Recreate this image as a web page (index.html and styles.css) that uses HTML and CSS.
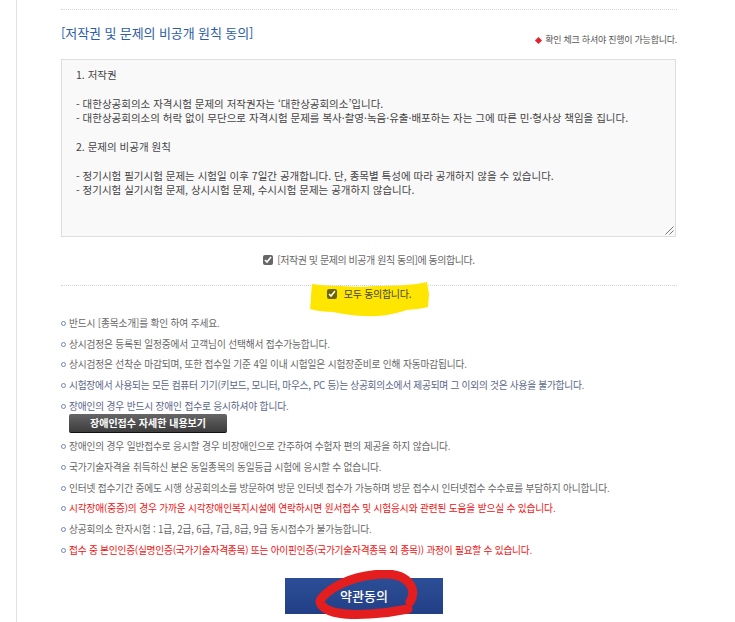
FILE: index.html
```html
<!DOCTYPE html>
<html lang="ko">
<head>
<meta charset="utf-8">
<title>약관동의</title>
<link rel="stylesheet" href="styles.css">
</head>
<body>
<div class="page">
  <div class="content">
    <div class="rule first"></div>
    <div class="head">
      <h2 class="title">[저작권 및 문제의 비공개 원칙 동의]</h2>
      <p class="notice"><span class="diamond"></span>확인 체크 하셔야 진행이 가능합니다.</p>
    </div>
    <div class="terms">
      <p>1. 저작권</p>
      <p>&nbsp;</p>
      <p>- 대한상공회의소 자격시험 문제의 저작권자는 ‘대한상공회의소’입니다.</p>
      <p>- 대한상공회의소의 허락 없이 무단으로 자격시험 문제를 복사·촬영·녹음·유출·배포하는 자는 그에 따른 민·형사상 책임을 집니다.</p>
      <p>&nbsp;</p>
      <p>2. 문제의 비공개 원칙</p>
      <p>&nbsp;</p>
      <p>- 정기시험 필기시험 문제는 시험일 이후 7일간 공개합니다. 단, 종목별 특성에 따라 공개하지 않을 수 있습니다.</p>
      <p>- 정기시험 실기시험 문제, 상시시험 문제, 수시시험 문제는 공개하지 않습니다.</p>
      <svg class="grip" width="10" height="10" viewBox="0 0 10 10"><path d="M9.5 1.5 1.5 9.5M9.5 5.5 5.5 9.5" stroke="#777" stroke-width="1" fill="none"/></svg>
    </div>
    <label class="agree"><input type="checkbox" checked>[저작권 및 문제의 비공개 원칙 동의]에 동의합니다.</label>
    <div class="rule"></div>
    <label class="agree all"><input type="checkbox" checked>모두 동의합니다.</label>
    <ul class="notes">
      <li>반드시 [종목소개]를 확인 하여 주세요.</li>
      <li>상시검정은 등록된 일정중에서 고객님이 선택해서 접수가능합니다.</li>
      <li>상시검정은 선착순 마감되며, 또한 접수일 기준 4일 이내 시험일은 시험장준비로 인해 자동마감됩니다.</li>
      <li class="blue tight">시험장에서 사용되는 모든 컴퓨터 기기(키보드, 모니터, 마우스, PC 등)는 상공회의소에서 제공되며 그 이외의 것은 사용을 불가합니다.</li>
      <li class="blue has-btn">장애인의 경우 반드시 장애인 접수로 응시하셔야 합니다.<a class="detail" href="#">장애인접수 자세한 내용보기</a></li>
      <li>장애인의 경우 일반접수로 응시할 경우 비장애인으로 간주하여 수험자 편의 제공을 하지 않습니다.</li>
      <li>국가기술자격을 취득하신 분은 동일종목의 동일등급 시험에 응시할 수 없습니다.</li>
      <li>인터넷 접수기간 중에도 시행 상공회의소를 방문하여 방문 인터넷 접수가 가능하며 방문 접수시 인터넷접수 수수료를 부담하지 아니합니다.</li>
      <li class="red">시각장애(중증)의 경우 가까운 시각장애인복지시설에 연락하시면 원서접수 및 시험응시와 관련된 도움을 받으실 수 있습니다.</li>
      <li>상공회의소 한자시험 : 1급, 2급, 6급, 7급, 8급, 9급 동시접수가 불가능합니다.</li>
      <li class="red snug">접수 중 본인인증(실명인증(국가기술자격종목) 또는 아이핀인증(국가기술자격종목 외 종목)) 과정이 필요할 수 있습니다.</li>
    </ul>
    <div class="actions"><a class="submit" href="#">약관동의</a></div>
  </div>
</div>
<svg class="mark yellow" width="119" height="35" viewBox="0 0 119 35"><path d="M2 2C10 3 20 4 30 4 45 5 55 5 65 4 85 4 105 3 117 0L119 12 118 25C110 27 104 27 97 28 84 32 70 35 57 34 45 34 33 32 23 30 15 30 7 29 0 27 1 18 1 10 2 2Z" fill="#ffe600"/></svg>
<svg class="mark scribble" width="110" height="52" viewBox="0 0 110 52"><path d="M94 39C70 44 40 46 24 43 12 41 3 34 7 29 16 17 38 7 58 5 72 3 85 4 92 10 99 16 101 24 96 32" fill="none" stroke="#e41e1e" stroke-width="9" stroke-linecap="round" stroke-linejoin="round"/></svg>
</body>
</html>
```
FILE: styles.css
```css
html, body { margin: 0; padding: 0; height: 622px; overflow: hidden; background: #fff; }
body { position: relative; font-family: "Noto Sans CJK KR", "Noto Sans", sans-serif; color: #555; }
p, h2, ul { margin: 0; padding: 0; }
.page { margin-left: 16px; border-left: 1px solid #e2e2e2; padding-left: 44px; width: 616px; height: 622px; }
.content { width: 616px; padding-top: 9px; }
.rule { border-top: 1px dotted #d4d4d4; }
.head { display: flex; justify-content: space-between; align-items: flex-end; height: 49px; }
.title { font-size: 13px; font-weight: 400; line-height: 20px; color: #2b5ea6; margin-bottom: 16px; letter-spacing: -0.1px; }
.notice { font-size: 9px; line-height: 12px; color: #555; margin-bottom: 13px; letter-spacing: -0.25px; display: flex; align-items: center; }
.diamond { width: 5px; height: 5px; background: #e8202a; transform: rotate(45deg); margin-right: 4px; }
.terms { position: relative; box-sizing: border-box; width: 615px; height: 178px; border: 1px solid #ddd; background: #f9f9f9; padding: 8px 14px; font-size: 10.5px; line-height: 14.4px; color: #444; }
.grip { position: absolute; right: 1px; bottom: 1px; }
.agree { display: flex; align-items: center; justify-content: center; font-size: 10px; line-height: 14px; color: #666; letter-spacing: -0.45px; }
.agree input { margin: 0 4px 0 0; width: 10px; height: 10px; accent-color: #666; }
.terms + .agree { margin: 16px 0 18px; }
.agree.all { position: relative; z-index: 2; margin-top: 1px; color: #444; height: 14px; letter-spacing: -0.3px; }
.agree.all input { margin-right: 7px; accent-color: #6b6400; }
.notes { list-style: none; margin-top: 15px; font-size: 9.7px; line-height: 14px; color: #666; }
.notes li { position: relative; padding-left: 8px; margin-bottom: 6.7px; letter-spacing: -0.15px; }
.notes li::before { content: ""; position: absolute; left: 0; top: 5px; width: 3px; height: 3px; border: 1px solid #6f86c4; border-radius: 50%; }
.notes .blue { color: #5a6488; }
.notes .red { color: #f01010; }
.notes .tight { letter-spacing: -0.25px; }
.notes .snug { letter-spacing: -0.22px; }
.detail { display: block; box-sizing: border-box; width: 158px; height: 19px; margin-top: 1px; background: linear-gradient(#666, #3c3c3c); border-bottom: 1px solid #111; border-radius: 2px; color: #fff; text-align: center; font-size: 10px; font-weight: 700; line-height: 17px; letter-spacing: 0; text-decoration: none; }
.notes .has-btn { margin-bottom: 6.5px; }
.actions { display: flex; justify-content: center; margin-top: 21px; padding-right: 10px; }
.submit { display: block; width: 158px; height: 36px; background: linear-gradient(#2c4e96, #223f86); color: #fff; font-size: 13px; font-weight: 500; text-align: center; line-height: 36px; text-decoration: none; }
.mark { position: absolute; }
.yellow { left: 310px; top: 282px; z-index: 1; }
.scribble { left: 314px; top: 570px; z-index: 3; }
```
